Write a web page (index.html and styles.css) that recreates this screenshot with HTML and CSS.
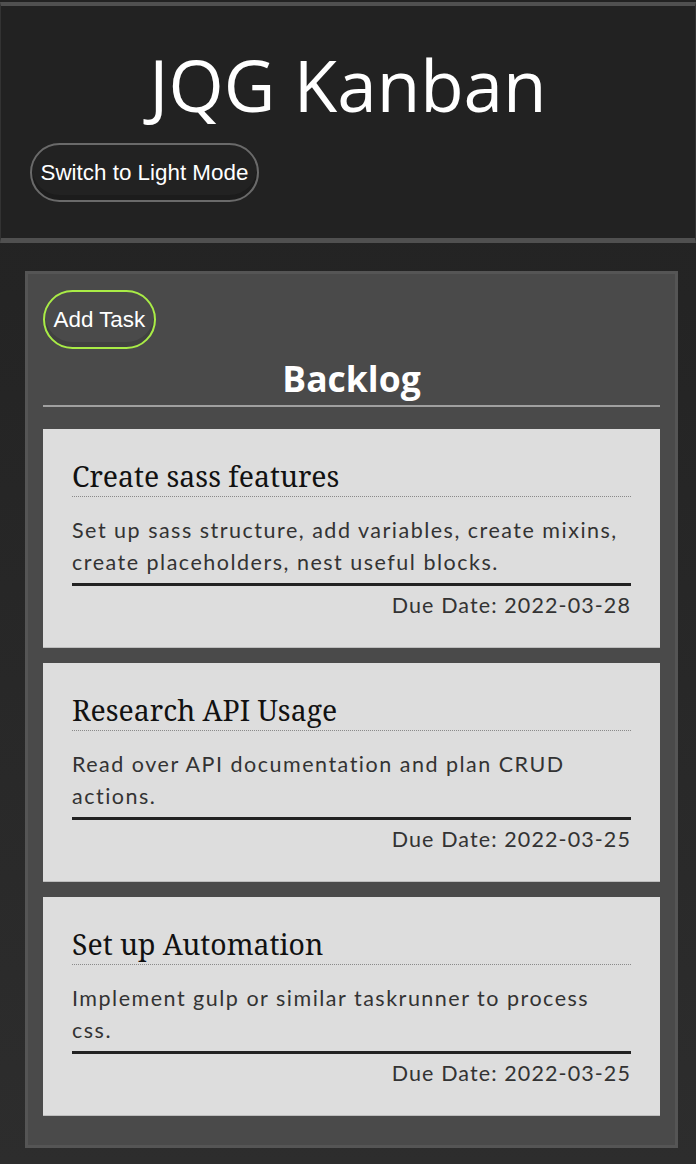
FILE: index.html
```html
<!DOCTYPE html>
<html lang="en">
<head>
<meta charset="utf-8">
<title>JQG Kanban</title>
<link rel="stylesheet" href="styles.css">
</head>
<body>
<header class="site-header">
  <h1 class="site-title">JQG Kanban</h1>
  <button class="btn btn-mode" type="button">Switch to Light Mode</button>
</header>
<main class="board">
  <section class="column">
    <button class="btn btn-add" type="button">Add Task</button>
    <h2 class="column-title">Backlog</h2>
    <div class="cards">
      <article class="card">
        <h3 class="card-title">Create sass features</h3>
        <p class="card-desc">Set up sass structure, add variables, create mixins, create placeholders, nest useful blocks.</p>
        <p class="card-due">Due Date: 2022-03-28</p>
      </article>
      <article class="card">
        <h3 class="card-title">Research API Usage</h3>
        <p class="card-desc">Read over API documentation and plan CRUD actions.</p>
        <p class="card-due">Due Date: 2022-03-25</p>
      </article>
      <article class="card">
        <h3 class="card-title">Set up Automation</h3>
        <p class="card-desc">Implement gulp or similar taskrunner to process css.</p>
        <p class="card-due">Due Date: 2022-03-25</p>
      </article>
    </div>
  </section>
</main>
</body>
</html>
```
FILE: styles.css
```css
html {
  background: #2a2a2a;
}
body {
  margin: 0;
  padding-top: 2px;
  min-height: 1162px;
  background: linear-gradient(#222222 0, #242424 300px, #2d2d2d 1164px);
  font-family: "Liberation Sans", Arial, sans-serif;
  color: #fff;
}
.site-header {
  background: #222222;
  border-top: 4px solid #505050;
  border-bottom: 5px solid #505050;
  border-left: 1px solid #333;
  border-right: 1px solid #333;
  padding: 36px 29px 36px;
}
.site-title {
  margin: 0 0 15px;
  font-family: "Open Sans", sans-serif;
  font-weight: 400;
  font-size: 71px;
  line-height: 86px;
  text-align: center;
  color: #fff;
}
.btn {
  display: block;
  font-family: "Liberation Sans", Arial, sans-serif;
  font-size: 22.4px;
  line-height: 26px;
  color: #fff;
  border-radius: 30px;
  padding: 14.5px 8.5px;
  cursor: pointer;
}
.btn-mode {
  background: #222;
  border: 2px solid #6a6a6a;
  box-shadow: inset 0 -5px 0 #1c1c1c;
}
.btn-add {
  background: #4a4a4a;
  border: 2px solid #a9ec46;
  box-shadow: inset 0 -5px 0 #404040;
}
.board {
  padding: 28px 18px 17px 25px;
}
.column {
  background: #4a4a4a;
  border: 3px solid #555555;
  padding: 16px 15px 29px;
}
.column-title {
  margin: 4px 0 0;
  font-family: "Open Sans", sans-serif;
  font-weight: 700;
  font-size: 35.5px;
  line-height: 50px;
  text-align: center;
  color: #fff;
  border-bottom: 2px solid #a0a0a0;
  padding-bottom: 2px;
}
.cards {
  margin-top: 22px;
  display: flex;
  flex-direction: column;
  gap: 15px;
}
.card {
  background: #dddddd;
  padding: 29px 29px 26px;
  border-bottom: 1px solid #bdbdbd;
  color: #2f2f2f;
}
.card-title {
  margin: 0;
  font-family: "Noto Serif", "DejaVu Serif Condensed", "DejaVu Serif", serif;
  font-weight: 400;
  font-size: 28.4px;
  line-height: 36px;
  color: #111;
  padding-bottom: 2px;
  border-bottom: 1px dotted #8a8a8a;
}
.card-desc {
  margin: 17px 0 5px;
  font-family: Lato, "Noto Sans", sans-serif;
  font-size: 21.5px;
  line-height: 32px;
  letter-spacing: 1.5px;
  color: #333;
}
.card-due {
  margin: 0;
  border-top: 3px solid #222;
  padding-top: 3px;
  font-family: Lato, "Noto Sans", sans-serif;
  font-size: 21.5px;
  line-height: 32px;
  letter-spacing: 1.1px;
  text-align: right;
  color: #333;
}
```
